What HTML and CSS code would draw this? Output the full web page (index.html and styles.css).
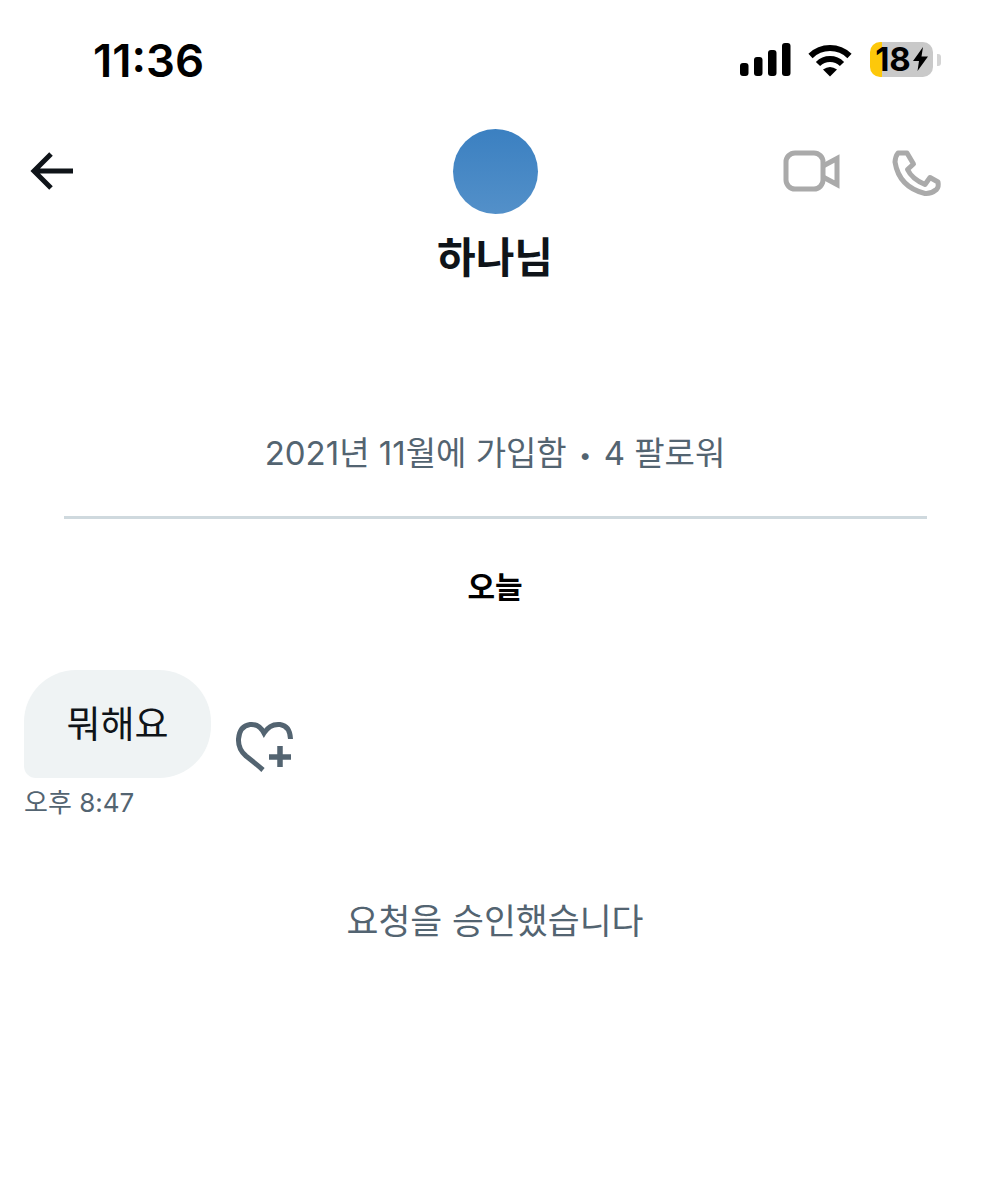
FILE: index.html
```html
<!DOCTYPE html>
<html lang="ko">
<head>
  <meta charset="UTF-8" />
  <meta name="viewport" content="width=device-width, initial-scale=1.0"/>
  <title>하나님</title>
  <link rel="stylesheet" href="styles.css">
</head>
<body>
  <div class="status-bar">
    <span class="clock">11:36</span>
    <div class="status-icons">
      <svg class="signal" width="51" height="34" viewBox="0 0 51 34">
        <rect x="0" y="20" width="8.5" height="13" rx="3"/>
        <rect x="14" y="14" width="8.5" height="19" rx="3"/>
        <rect x="28" y="7" width="8.5" height="26" rx="3"/>
        <rect x="42" y="0" width="8.5" height="33" rx="3"/>
      </svg>
      <svg class="wifi" width="44" height="34" viewBox="0 0 44 34">
        <path d="M2.500 13 A28 28 0 0 1 41.500 13" fill="none" stroke="#000" stroke-width="6"/>
        <path d="M10 21 A17 17 0 0 1 34 21" fill="none" stroke="#000" stroke-width="6"/>
        <path d="M15 26.500 Q22 21.500 29 26.500 L22 33.500 Z"/>
      </svg>
      <div class="battery-wrap">
        <div class="battery">18<svg width="15" height="24" viewBox="0 0 15 24"><path d="M10 0 L0 14 H6 L4.500 24 L15 9.500 H8.500 Z"/></svg></div>
        <div class="battery-nub"></div>
      </div>
    </div>
  </div>

  <header class="chat-head">
    <svg class="back" width="46" height="42" viewBox="0 0 46 42">
      <path d="M43 20 H5 M21 3 L4 20 L21 37" fill="none" stroke="#0f1419" stroke-width="5"/>
    </svg>
    <div class="profile">
      <div class="avatar"></div>
      <h1>하나님</h1>
    </div>
    <div class="actions">
      <svg class="video" width="58" height="44" viewBox="0 0 58 44">
        <rect x="3" y="3" width="37" height="36" rx="9" fill="none" stroke="#aaa" stroke-width="5"/>
        <path d="M40 16 L54 8.500 V34.500 L40 27" fill="none" stroke="#aaa" stroke-width="5"/>
      </svg>
      <svg width="54" height="54" viewBox="0 0 54 54">
        <path d="M8 5 L17 5 L23.500 16 L17.500 21.500 Q22 31 35 36.500 L40 29.500 L48 34 Q49 39 46.500 41.500 Q41 46 35 45.500 Q9 39 5 14 Q5.500 8 8 5 Z" fill="none" stroke="#aaa" stroke-width="5" stroke-linejoin="round"/>
      </svg>
    </div>
  </header>

  <p class="joined">2021년 11월에 가입함 <span class="dot">•</span> 4 팔로워</p>
  <div class="divider"></div>
  <p class="day">오늘</p>

  <div class="message">
    <div class="bubble-row">
      <div class="bubble">뭐해요</div>
      <svg class="like" width="58" height="52" viewBox="0 0 58 52">
        <path d="M28 50 Q20 43 11 36 Q3 29 3.500 19 Q4.500 6 15 4.500 Q24 3.500 29 13 Q35 3.500 45 4.500 Q55 6 55.500 19" fill="none" stroke="#536471" stroke-width="5"/>
        <path d="M45 26 V47 M34 37 H56" fill="none" stroke="#536471" stroke-width="5.500"/>
      </svg>
    </div>
    <div class="time">오후 8:47</div>
  </div>

  <p class="notice">요청을 승인했습니다</p>
</body>
</html>
```

FILE: styles.css
```css
body {
  margin: 0;
  background-color: #ffffff;
  color: #0f1419;
  font-family: Inter, "Noto Sans CJK KR", sans-serif;
}
p {
  margin: 0;
}
.status-bar {
  display: flex;
  justify-content: space-between;
  align-items: center;
  height: 120px;
  padding: 0 49px 0 93px;
}
.clock {
  font-size: 45.5px;
  font-weight: 600;
  color: #000;
}
.status-icons {
  display: flex;
  align-items: center;
  gap: 17px;
}
.battery-wrap {
  display: flex;
  align-items: center;
  gap: 4px;
  margin-left: 1px;
}
.battery {
  display: flex;
  align-items: center;
  justify-content: center;
  gap: 2px;
  width: 63px;
  height: 35px;
  margin-top: -2px;
  border-radius: 10px;
  background: linear-gradient(to right, #fdc80a 12px, #c9c9c9 12px);
  color: #000;
  font-size: 33px;
  font-weight: 700;
}
.battery-nub {
  width: 4px;
  height: 12px;
  border-radius: 0 3px 3px 0;
  background-color: #d4d4d4;
}
.chat-head {
  display: grid;
  grid-template-columns: minmax(0, 1fr) auto minmax(0, 1fr);
  padding: 9px 30px 0;
}
.back {
  margin-top: 22px;
}
.profile {
  display: flex;
  flex-direction: column;
  align-items: center;
}
.avatar {
  width: 85px;
  height: 85px;
  margin-left: 1px;
  border-radius: 50%;
  background: linear-gradient(#3b80c1, #5390c9);
}
h1 {
  margin: 16px 0 0;
  font-size: 42px;
  line-height: 56px;
  font-weight: 700;
}
.actions {
  display: flex;
  justify-content: flex-end;
  align-items: flex-start;
  gap: 49px;
  margin-top: 19px;
  padding-right: 16px;
}
.video {
  margin-top: 2px;
}
.joined {
  margin-top: 144px;
  text-align: center;
  font-size: 33px;
  line-height: 46px;
  color: #536471;
}
.dot {
  margin: 0 3px;
  font-size: 22px;
  vertical-align: 2px;
}
.divider {
  height: 3px;
  margin: 38px 63px 0 64px;
  background-color: #cfd9de;
}
.day {
  margin-top: 48px;
  text-align: center;
  font-size: 30px;
  line-height: 40px;
  font-weight: 700;
  color: #000;
}
.message {
  margin: 63px 0 0 24px;
}
.bubble-row {
  display: flex;
  align-items: flex-end;
  gap: 24px;
}
.bubble {
  display: flex;
  align-items: center;
  justify-content: center;
  width: 187px;
  height: 108px;
  border-radius: 52px 52px 52px 12px;
  background-color: #eff3f4;
  font-size: 37px;
  padding-bottom: 4px;
  box-sizing: border-box;
}
.like {
  margin-bottom: 6px;
}
.time {
  margin-top: 6px;
  font-size: 26px;
  line-height: 38px;
  color: #536471;
}
.notice {
  margin-top: 76px;
  text-align: center;
  font-size: 34.7px;
  line-height: 46px;
  color: #536471;
}
```
